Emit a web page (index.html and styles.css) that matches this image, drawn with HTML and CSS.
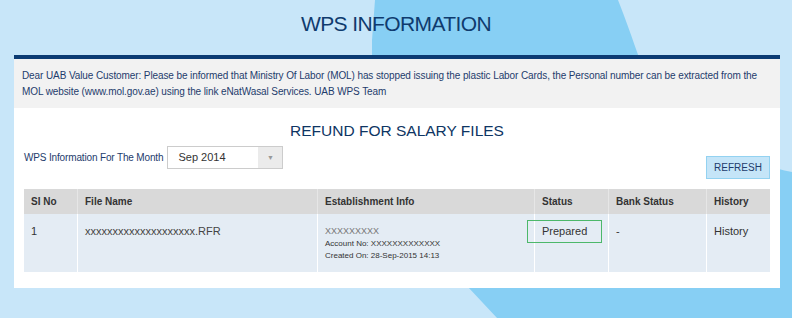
FILE: index.html
```html
<!DOCTYPE html>
<html>
<head lang="en">
    <meta charset="UTF-8">
    <title>WPS Information</title>
    <link rel="stylesheet" href="styles.css">
</head>
<body>
<!-- background decoration -->
<svg class="bg" width="792" height="318" viewBox="0 0 792 318">
    <path d="M375,0 L618,0 C626,20 632,38 640,60 C670,120 730,160 792,172 L792,318 L497,318 L468,287 L372,200 L372,40 Z" fill="#87cff4"/>
</svg>

<div class="page">
    <h1 class="page-title">WPS INFORMATION</h1>
    <div class="panel">
        <div class="notice">
            Dear UAB Value Customer: Please be informed that Ministry Of Labor (MOL) has stopped issuing the plastic Labor Cards, the Personal number can be extracted from the MOL website (www.mol.gov.ae) using the link eNatWasal Services. UAB WPS Team
        </div>
        <div class="content">
            <h2 class="section-title">REFUND FOR SALARY FILES</h2>
            <div class="toolbar">
                <div class="month">
                    <span class="month-label">WPS Information For The Month</span>
                    <div class="select">
                        <span class="select-value">Sep 2014</span>
                        <span class="select-arrow">&#9660;</span>
                    </div>
                </div>
                <button class="btn-refresh">REFRESH</button>
            </div>
            <table class="files">
                <colgroup>
                    <col style="width:53px">
                    <col style="width:240px">
                    <col style="width:217px">
                    <col style="width:74px">
                    <col style="width:98px">
                    <col style="width:64px">
                </colgroup>
                <thead>
                <tr>
                    <th>SI No</th>
                    <th>File Name</th>
                    <th>Establishment Info</th>
                    <th>Status</th>
                    <th>Bank Status</th>
                    <th>History</th>
                </tr>
                </thead>
                <tbody>
                <tr>
                    <td>1</td>
                    <td class="file-name">xxxxxxxxxxxxxxxxxxxx.RFR</td>
                    <td class="est">
                        <div class="est-name">XXXXXXXXX</div>
                        <div class="est-line">Account No: XXXXXXXXXXXXX</div>
                        <div class="est-line">Created On: 28-Sep-2015 14:13</div>
                    </td>
                    <td><span class="status">Prepared</span></td>
                    <td>-</td>
                    <td>History</td>
                </tr>
                </tbody>
            </table>
        </div>
    </div>
</div>
</body>
</html>
```

FILE: styles.css
```css
* {
    margin: 0;
    padding: 0;
    box-sizing: border-box;
}
body {
    width: 792px;
    height: 318px;
    overflow: hidden;
    position: relative;
    background-color: #c8e6f9;
    font-family: "Liberation Sans", Arial, sans-serif;
}
.bg {
    position: absolute;
    top: 0;
    left: 0;
}
.page {
    position: relative;
}
.page-title {
    height: 55px;
    line-height: 48px;
    text-align: center;
    font-size: 21px;
    font-weight: normal;
    letter-spacing: -0.6px;
    color: #0f3b6e;
}
.panel {
    margin: 0 12px 0 14px;
    background-color: #fff;
    border-top: 4px solid #0b3b73;
}
.notice {
    background-color: #f2f2f2;
    padding: 9px 8px 8px;
    font-size: 10px;
    line-height: 16px;
    letter-spacing: -0.1px;
    color: #1e3c6c;
}
.content {
    padding: 12px 10px 16px;
}
.section-title {
    text-align: center;
    font-size: 15.5px;
    line-height: 22px;
    font-weight: normal;
    color: #0e3563;
}
.toolbar {
    display: flex;
    justify-content: space-between;
    align-items: flex-start;
    margin-top: 4px;
}
.month {
    display: flex;
    align-items: center;
    gap: 4px;
}
.month-label {
    font-size: 10px;
    letter-spacing: -0.15px;
    color: #1e3c6c;
}
.select {
    display: flex;
    width: 116px;
    height: 23px;
    border: 1px solid #ccc;
    background-color: #fff;
}
.select-value {
    flex: 1;
    padding-left: 10px;
    font-size: 11px;
    line-height: 21px;
    color: #333;
}
.select-arrow {
    width: 24px;
    background-color: #ebebeb;
    text-align: center;
    font-size: 7px;
    line-height: 21px;
    color: #999;
}
.btn-refresh {
    margin-top: 10px;
    width: 64px;
    height: 23px;
    background-color: #c5e5f8;
    border: 1px solid #93d2f1;
    font-family: "Liberation Sans", Arial, sans-serif;
    font-size: 10px;
    color: #1e3c6c;
}
.files {
    margin-top: 10px;
    width: 746px;
    table-layout: fixed;
    border-collapse: separate;
    border-spacing: 0;
}
.files th {
    height: 25px;
    padding: 0 7px;
    background-color: #d9d9d9;
    text-align: left;
    font-size: 10px;
    font-weight: bold;
    color: #333;
}
.files td {
    height: 57px;
    padding: 10px 7px;
    vertical-align: top;
    background-color: #e4ecf4;
    font-size: 11px;
    line-height: 14px;
    color: #333;
}
.files th + th {
    border-left: 1px solid #e6e6e6;
}
.files td + td {
    border-left: 1px solid #fff;
}
.files td.file-name {
    color: #444;
}
.est-name {
    font-size: 9px;
    line-height: 14px;
    color: #777;
}
.est-line {
    font-size: 8px;
    line-height: 12px;
    color: #333;
}
.status {
    display: block;
    width: 75px;
    height: 23px;
    margin: -4px 0 0 -15px;
    padding-left: 14px;
    border: 1px solid #4cb86a;
    line-height: 21px;
}
```
